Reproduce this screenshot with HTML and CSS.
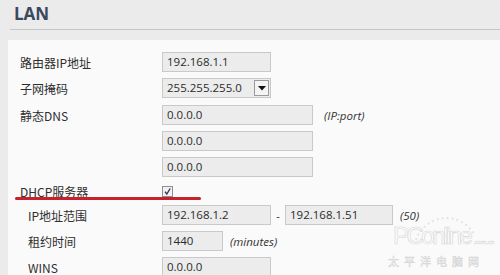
FILE: index.html
```html
<!DOCTYPE html>
<html lang="zh-CN">
<head>
<meta charset="utf-8">
<title>LAN</title>
<link rel="stylesheet" href="styles.css">
</head>
<body>
<div class="top">
  <h1 class="title">LAN</h1>
</div>
<div class="panel">
  <div class="row">
    <span class="label">路由器IP地址</span>
    <div class="field w109">192.168.1.1</div>
  </div>
  <div class="row">
    <span class="label">子网掩码</span>
    <div class="field w109 select">255.255.255.0<span class="dd"><svg width="8" height="5" viewBox="0 0 8 5"><path d="M0 0H8L4 4.5Z" fill="#111"/></svg></span></div>
  </div>
  <div class="row r27">
    <span class="label">静态DNS</span>
    <div class="field w151">0.0.0.0</div>
    <span class="hint">(IP:port)</span>
  </div>
  <div class="row">
    <span class="label"></span>
    <div class="field w151">0.0.0.0</div>
  </div>
  <div class="row">
    <span class="label"></span>
    <div class="field w151">0.0.0.0</div>
  </div>
  <div class="row check-row">
    <span class="label">DHCP服务器</span>
    <span class="checkbox"><svg width="9" height="9" viewBox="0 0 9 9"><path d="M2 4.6L3.8 7L7.2 1.5" fill="none" stroke="#2d3f5c" stroke-width="1.4"/></svg></span>
    <span class="mark"></span>
  </div>
  <div class="row">
    <span class="label sub">IP地址范围</span>
    <div class="field w109">192.168.1.2</div>
    <span class="dash">-</span>
    <div class="field w108">192.168.1.51</div>
    <span class="hint h50">(50)</span>
  </div>
  <div class="row">
    <span class="label sub">租约时间</span>
    <div class="field w61">1440</div>
    <span class="hint hmin">(minutes)</span>
  </div>
  <div class="row">
    <span class="label sub">WINS</span>
    <div class="field w109">0.0.0.0</div>
  </div>
  <div class="watermark">
    <svg class="wm-arc" width="70" height="30" viewBox="0 0 70 30"><path d="M6 28A32 32 0 0 1 64 22" fill="none" stroke="#e4e4e4" stroke-width="2" stroke-dasharray="2 3"/></svg>
    <div class="wm-main">PConline<span class="wm-dom">.com.cn</span></div>
    <div class="wm-cn">太平洋电脑网</div>
  </div>
</div>
</body>
</html>
```
FILE: styles.css
```css
html, body {
  margin: 0;
  padding: 0;
}
body {
  width: 500px;
  height: 275px;
  overflow: hidden;
  background: #ebebeb;
  font-family: "Open Sans", "Noto Sans CJK SC", sans-serif;
  color: #2b2b2b;
}
.top {
  height: 29px;
  margin-left: 10px;
  border-bottom: 1px solid #c6c6c6;
  margin-bottom: 10px;
}
.title {
  margin: 0;
  padding: 0 0 0 4px;
  font-size: 17px;
  line-height: 27px;
  font-weight: 700;
  color: #3a4860;
}
.panel {
  position: relative;
  margin-left: 8px;
  background: #fafafa;
  padding: 12px 0 0 12px;
  height: 223px;
}
.row {
  display: flex;
  align-items: center;
  height: 20px;
  margin-bottom: 6px;
}
.row.r27 {
  margin-top: 7px;
}
.label {
  width: 142px;
  flex: none;
  font-family: "Noto Sans CJK SC", sans-serif;
  font-size: 12px;
  color: #2e2e2e;
}
.label.sub {
  width: 134px;
  padding-left: 8px;
}
.field {
  box-sizing: border-box;
  height: 20px;
  border: 1px solid #c9c9c9;
  background: #ececec;
  font-size: 11.5px;
  line-height: 18px;
  padding-left: 4px;
  color: #2b2b2b;
  flex: none;
}
.w109 { width: 109px; }
.w108 { width: 108px; }
.w151 { width: 151px; }
.w61 { width: 61px; }
.select {
  display: flex;
  align-items: center;
  justify-content: space-between;
  padding-right: 1px;
}
.dd {
  box-sizing: border-box;
  width: 15px;
  height: 16px;
  border: 1px solid #9a9a9a;
  background: #f4f4f4;
  display: flex;
  align-items: center;
  justify-content: center;
}
.hint {
  font-style: italic;
  font-size: 11.5px;
  color: #333;
  margin-left: 11px;
}
.hint.h50 { margin-left: 7px; }
.hint.hmin { margin-left: 7px; }
.dash {
  width: 14px;
  text-align: center;
  font-size: 11px;
}
.check-row {
  height: 16px;
  position: relative;
}
.checkbox {
  box-sizing: border-box;
  width: 11px;
  height: 11px;
  border: 1px solid #8e8e8e;
  background: #f2f2f2;
  display: flex;
  align-items: center;
  justify-content: center;
}
.mark {
  position: absolute;
  left: -5px;
  top: 14px;
  width: 186px;
  height: 3px;
  border-radius: 2px;
  background: #c5222b;
}
.watermark {
  position: absolute;
  left: 376px;
  top: 176px;
  width: 110px;
  color: #ffffff;
}
.wm-arc {
  position: absolute;
  left: 26px;
  top: -4px;
}
.wm-main {
  font-family: "Liberation Sans", sans-serif;
  font-size: 24px;
  line-height: 24px;
  color: #fdfdfd;
  -webkit-text-stroke: 0.6px #d6d6d6;
  letter-spacing: -2.5px;
  padding-left: 9px;
  margin-top: 8px;
  white-space: nowrap;
}
.wm-dom {
  font-size: 6px;
  -webkit-text-stroke: 0.3px #d2d2d2;
  letter-spacing: 0;
  margin-left: 3px;
}
.wm-cn {
  font-family: "Noto Sans CJK SC", sans-serif;
  font-size: 11px;
  line-height: 14px;
  letter-spacing: 5px;
  color: #fdfdfd;
  -webkit-text-stroke: 0.5px #d2d2d2;
  padding-left: 4px;
  white-space: nowrap;
}
```
